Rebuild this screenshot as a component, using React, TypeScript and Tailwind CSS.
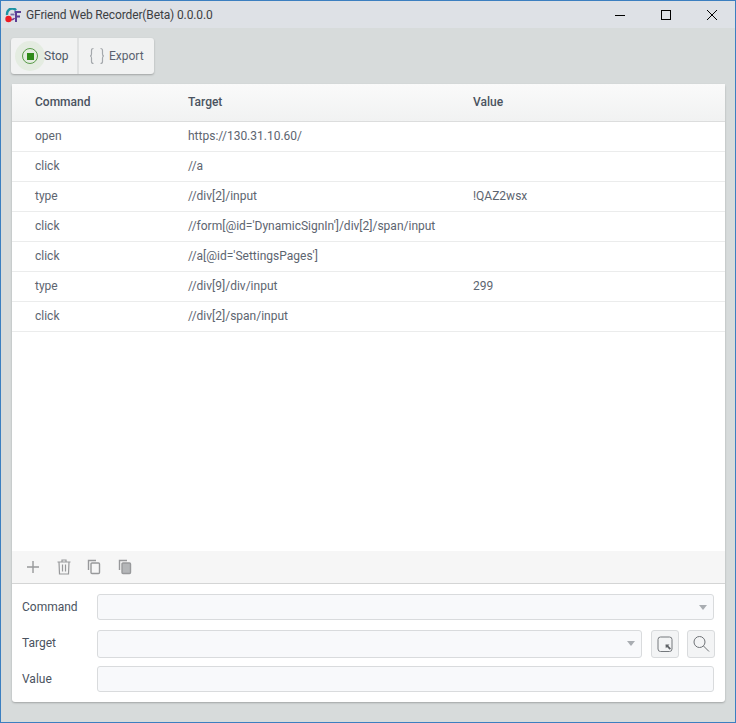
const font = "font-['Roboto',sans-serif]";
const rows = [
  ["open", "https://130.31.10.60/", ""],
  ["click", "//a", ""],
  ["type", "//div[2]/input", "!QAZ2wsx"],
  ["click", "//form[@id='DynamicSignIn']/div[2]/span/input", ""],
  ["click", "//a[@id='SettingsPages']", ""],
  ["type", "//div[9]/div/input", "299"],
  ["click", "//div[2]/span/input", ""],
];

function Logo() {
  return (
    <svg width="17" height="15" viewBox="0 0 17 15" className="mt-[1px]">
      <path d="M11 2.2 A5 5 0 0 0 3 2.8 Q1.8 4.5 2.1 7" fill="none" stroke="#1d93a3" strokeWidth="2.4" />
      <path d="M5.5 6.5 H9.5" stroke="#7a6aa8" strokeWidth="1.8" />
      <path d="M6 11.5 Q8.5 12 9.5 10" stroke="#7a3a8e" strokeWidth="1.6" fill="none" />
      <circle cx="3.5" cy="11" r="3.2" fill="#ee1c25" />
      <path d="M9.5 4 H16 M11 4 V14 M11 8.5 H15" stroke="#5b3f95" strokeWidth="2" fill="none" />
    </svg>
  );
}

function Arrow() {
  return <div className="absolute right-[6px] top-[10px] w-0 h-0 border-x-[4px] border-x-transparent border-t-[5px] border-t-[#a9adb2]" />;
}

export default function App() {
  return (
    <div className={`w-[736px] h-[723px] flex flex-col overflow-hidden border border-[#3c7fc0] bg-[#d7dbdb] ${font}`}>
      <div className="h-[27px] shrink-0 flex items-center bg-[#dee1e6] pl-[4px]">
        <Logo />
        <span className="ml-[4px] text-[12px] tracking-[-0.13px] text-[#3c4043]">GFriend Web Recorder(Beta) 0.0.0.0</span>
        <div className="ml-auto flex items-center">
          <svg width="136" height="27" viewBox="0 0 136 27" className="mr-[-1px]">
            <path d="M15 14.5 H25" stroke="#000" strokeWidth="1" />
            <rect x="61.5" y="9.5" width="9" height="9" fill="none" stroke="#000" />
            <path d="M107 9 L117 19 M117 9 L107 19" stroke="#000" strokeWidth="1" />
          </svg>
        </div>
      </div>

      <div className="flex-1 flex flex-col px-[10px] pt-[10px] pb-[20px] min-h-0">
        <div className="h-[36px] w-[143px] shrink-0 flex rounded-[3px] bg-[#f1f2f2] shadow-[0_1px_2px_rgba(0,0,0,0.25)]">
          <div className="relative w-[68px] flex items-center border-r-2 border-[#dfe1e1]">
            <div className="absolute left-[4px] top-[3px] w-[30px] h-[30px] rounded-full bg-[#e4ece1]" />
            <div className="relative ml-[11px] w-[16px] h-[16px] rounded-full border-[1.5px] border-[#5a9c4a] flex items-center justify-center">
              <div className="w-[7px] h-[7px] bg-[#2f8a1a]" />
            </div>
            <span className="relative ml-[6px] text-[12px] text-[#4f5866]">Stop</span>
          </div>
          <div className="flex items-center pl-[10px]">
            <svg width="16" height="18" viewBox="0 0 16 18" fill="none" stroke="#a4a8ac" strokeWidth="1.2">
              <path d="M4.5 1.5 Q2.5 1.5 2.5 3.5 V7 Q2.5 9 1 9 Q2.5 9 2.5 11 V14.5 Q2.5 16.5 4.5 16.5" />
              <path d="M11.5 1.5 Q13.5 1.5 13.5 3.5 V7 Q13.5 9 15 9 Q13.5 9 13.5 11 V14.5 Q13.5 16.5 11.5 16.5" />
            </svg>
            <span className="ml-[4px] text-[12px] text-[#5a6270]">Export</span>
          </div>
        </div>

        <div className="mt-[10px] flex-1 min-h-0 flex flex-col rounded-[3px] bg-white shadow-[0_1px_2px_rgba(0,0,0,0.25)] ml-[1px]">
          <div className="h-[38px] shrink-0 flex items-center pb-[2px] bg-gradient-to-b from-[#fafafa] to-[#f1f2f2] border-b border-[#dcdddd] text-[12px] font-medium text-[#4a5360]">
            <div className="w-[153px] pl-[23px]">Command</div>
            <div className="w-[285px] pl-[23px]">Target</div>
            <div className="pl-[23px]">Value</div>
          </div>
          <div className="flex-1 min-h-0">
            {rows.map((r, i) => (
              <div key={i} className="h-[30px] flex items-center pb-[2px] border-b border-[#ebecec] text-[12px] text-[#5d6570]">
                <div className="w-[153px] pl-[23px]">{r[0]}</div>
                <div className="w-[285px] pl-[23px]">{r[1]}</div>
                <div className="pl-[23px]">{r[2]}</div>
              </div>
            ))}
          </div>
          <div className="h-[33px] shrink-0 flex items-center bg-[#f6f6f6] border-b border-[#d4d5d5] pl-[13px]">
            <svg width="16" height="16" viewBox="0 0 16 16"><path d="M8 2 V14 M2 8 H14" stroke="#98999b" strokeWidth="1.4" /></svg>
            <svg className="ml-[15px]" width="16" height="16" viewBox="0 0 16 16" fill="none" stroke="#98999b" strokeWidth="1.2"><path d="M1.5 3 H14.5 M6 3 V1 H10 V3 M3 3 L3.5 15 H12.5 L13 3 M6.5 5.5 V12.5 M9.5 5.5 V12.5" /></svg>
            <svg className="ml-[14px]" width="16" height="16" viewBox="0 0 16 16" fill="none" stroke="#98999b" strokeWidth="1.4"><path d="M2.5 11 V1.5 H10" /><rect x="5" y="4" width="8.5" height="10.5" rx="1" /></svg>
            <svg className="ml-[15px]" width="16" height="16" viewBox="0 0 16 16" fill="none" stroke="#98999b" strokeWidth="1.4"><path d="M2.5 11 V1.5 H10" /><rect x="5" y="4" width="8.5" height="10.5" rx="1" fill="#b4b6b8" /></svg>
          </div>
          <div className="shrink-0 flex flex-col pl-[10px] pr-[11px] pt-[10px] pb-[10px]">
            <div className="flex items-center">
              <div className="w-[75px] text-[12px] text-[#4a5360] leading-none">Command</div>
              <div className="relative flex-1 h-[26px] rounded-[3px] border border-[#d9dbdd] bg-[#f8f9fb]"><Arrow /></div>
            </div>
            <div className="flex items-center mt-[10px] mr-[-1px]">
              <div className="w-[75px] pb-[2px] text-[12px] text-[#4a5360] leading-none">Target</div>
              <div className="relative flex-1 h-[28px] rounded-[3px] border border-[#d9dbdd] bg-[#f8f9fb]"><Arrow /></div>
              <div className="ml-[9px] w-[28px] h-[28px] rounded-[3px] border border-[#d9dbdd] bg-[#f3f4f5] flex items-center justify-center">
                <svg width="16" height="16" viewBox="0 0 16 16" fill="none"><rect x="1" y="1" width="14" height="14.5" rx="2.5" stroke="#75797d" /><path d="M8.5 8.5 H12.5 L11.3 9.7 L14 12.5 L12.7 13.8 L10 11 L8.8 12.3 Z" fill="#5e6266" /></svg>
              </div>
              <div className="ml-[8px] w-[28px] h-[28px] rounded-[3px] border border-[#d9dbdd] bg-[#f3f4f5] flex items-center justify-center">
                <svg width="18" height="18" viewBox="0 0 18 18" fill="none" stroke="#6e7276"><circle cx="7.5" cy="7" r="5.5" /><path d="M11.5 11 L17 16.5" /></svg>
              </div>
            </div>
            <div className="flex items-center mt-[8px]">
              <div className="w-[75px] text-[12px] text-[#4a5360] leading-none">Value</div>
              <div className="relative flex-1 h-[26px] rounded-[3px] border border-[#d9dbdd] bg-[#f8f9fb]" />
            </div>
          </div>
        </div>
      </div>
    </div>
  );
}
